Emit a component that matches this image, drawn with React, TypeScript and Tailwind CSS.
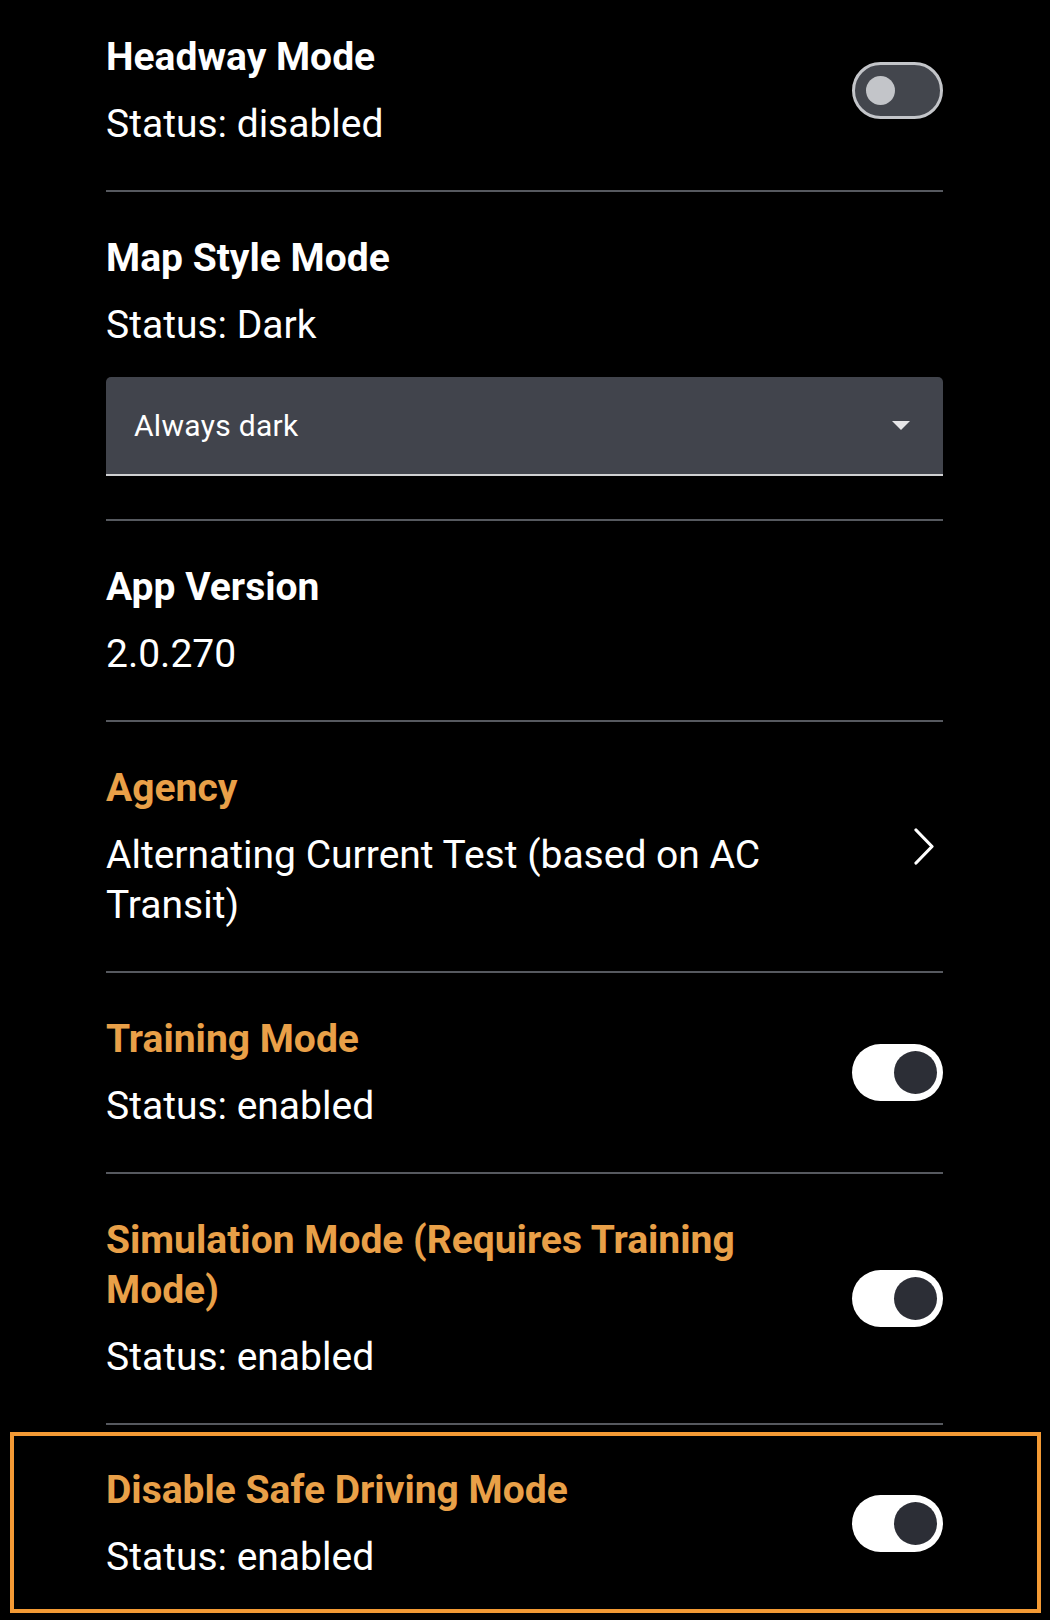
import React from "react";

type Props = {
  title: string;
  accent?: boolean;
  lines: string[];
  right?: React.ReactNode;
  className?: string;
};

const Toggle = ({ on }: { on: boolean }) =>
  on ? (
    <div className="flex h-[57px] w-[91px] shrink-0 items-center justify-end rounded-full bg-white pr-[6px]">
      <div className="h-[43px] w-[43px] rounded-full bg-[#2c2e36]" />
    </div>
  ) : (
    <div className="flex h-[57px] w-[91px] shrink-0 items-center rounded-full border-[3px] border-[#c3c5c9] bg-[#43464d] pl-[11px]">
      <div className="h-[29px] w-[29px] rounded-full bg-[#c3c5c9]" />
    </div>
  );

const Chevron = () => (
  <svg width="22" height="37" viewBox="0 0 22 37" className="mr-[8px] shrink-0">
    <polyline points="3,2 19,18.5 3,35" fill="none" stroke="white" strokeWidth="3.2" strokeLinecap="round" strokeLinejoin="round" />
  </svg>
);

// one settings row: title, status lines and an optional control on the right
const Row = ({ title, accent, lines, right, className }: Props) => (
  <div className={`flex items-center ${className ?? ""}`}>
    <div className="min-w-0 flex-1">
      <div className="max-w-[700px]">
        <div className={`text-[39px] font-bold leading-[50px] ${accent ? "text-[#e9a048]" : "text-white"}`}>{title}</div>
        <div className="mt-[17px] text-[39px] leading-[50px] text-white">
          {lines.map((l, i) => (
            <div key={i}>{l}</div>
          ))}
        </div>
      </div>
    </div>
    {right}
  </div>
);

export default function App() {
  return (
    <div className="min-h-[1620px] w-full bg-black font-['Roboto','Liberation_Sans',sans-serif] text-white">
      <div className="pl-[106px] pr-[107px]">
        <Row
          title="Headway Mode"
          lines={["Status: disabled"]}
          right={<Toggle on={false} />}
          className="border-b-2 border-[#56595f] pb-[41px] pt-[32px]"
        />

        <div className="border-b-2 border-[#56595f] pb-[43px] pt-[41px]">
          <div className="text-[39px] font-bold leading-[50px]">Map Style Mode</div>
          <div className="mt-[17px] text-[39px] leading-[50px]">Status: Dark</div>
          <div className="mt-[27px] flex h-[99px] items-center justify-between rounded-t-[5px] border-b-2 border-[#cfd0d2] bg-[#41444c] pl-[28px] pr-[33px]">
            <span className="text-[30px] tracking-[0.3px] text-white">Always dark</span>
            <svg width="18" height="9" viewBox="0 0 18 9">
              <polygon points="0,0 18,0 9,9" fill="#e6e6e8" />
            </svg>
          </div>
        </div>

        <Row
          title="App Version"
          lines={["2.0.270"]}
          className="border-b-2 border-[#56595f] pb-[41px] pt-[41px]"
        />

        <Row
          title="Agency"
          accent
          lines={["Alternating Current Test (based on AC Transit)"]}
          right={<Chevron />}
          className="border-b-2 border-[#56595f] pb-[41px] pt-[41px]"
        />

        <Row
          title="Training Mode"
          accent
          lines={["Status: enabled"]}
          right={<Toggle on />}
          className="border-b-2 border-[#56595f] pb-[41px] pt-[41px]"
        />

        <Row
          title="Simulation Mode (Requires Training Mode)"
          accent
          lines={["Status: enabled"]}
          right={<Toggle on />}
          className="border-b-2 border-[#56595f] pb-[41px] pt-[41px]"
        />

        {/* highlighted row */}
        <div className="-ml-[96px] -mr-[98px] mt-[7px] border-4 border-[#f39a35] pb-[27px] pl-[92px] pr-[94px] pt-[29px]">
          <Row title="Disable Safe Driving Mode" accent lines={["Status: enabled"]} right={<Toggle on />} />
        </div>
      </div>
    </div>
  );
}
